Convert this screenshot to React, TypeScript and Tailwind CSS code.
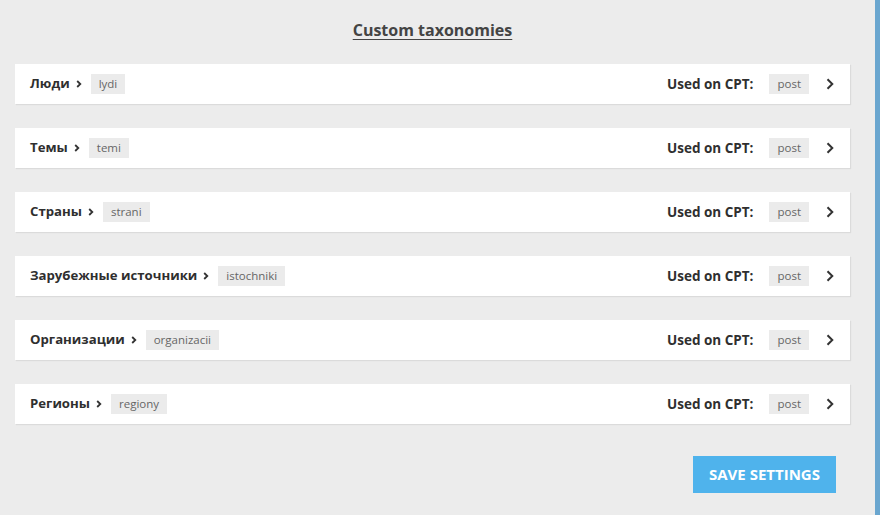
import React from "react";

const rows = [
  { name: "Люди", slug: "lydi" },
  { name: "Темы", slug: "temi" },
  { name: "Страны", slug: "strani" },
  { name: "Зарубежные источники", slug: "istochniki" },
  { name: "Организации", slug: "organizacii" },
  { name: "Регионы", slug: "regiony" },
];

function Chevron() {
  return (
    <svg width="8" height="12" viewBox="0 0 8 12" className="text-[#333]">
      <path d="M1.5 1.2 L6.3 6 L1.5 10.8" fill="none" stroke="currentColor" strokeWidth="2" />
    </svg>
  );
}

function SmallChevron() {
  return (
    <svg width="6" height="8" viewBox="0 0 6 8" className="text-[#333]">
      <path d="M1.2 1 L4.3 4 L1.2 7" fill="none" stroke="currentColor" strokeWidth="1.8" />
    </svg>
  );
}

export default function App() {
  return (
    <div
      className="flex h-[515px] w-[880px] bg-[#ececec] text-[#333]"
      style={{ fontFamily: '"Open Sans", "Noto Sans", sans-serif' }}
    >
      <div className="flex flex-1 flex-col pl-[15px] pr-[25px]">
        <h2 className="mt-[19px] text-center text-[16px] font-bold leading-[22px] text-[#444] underline underline-offset-[3px]">
          Custom taxonomies
        </h2>
        <div className="mt-[23px] flex flex-col gap-[24px]">
          {rows.map((r) => (
            <div
              key={r.slug}
              className="flex h-[40px] items-center bg-white pl-[15px] pr-[16px] shadow-[1px_1px_1px_rgba(0,0,0,0.07)]"
            >
              <span className="text-[13.2px] font-bold text-[#2f2f2f]">{r.name}</span>
              <span className="ml-[6px] flex items-center">
                <SmallChevron />
              </span>
              <span className="ml-[9px] bg-[#ebebeb] px-[8px] py-[3px] text-[11.5px] leading-[14px] text-[#666]">
                {r.slug}
              </span>
              <span className="ml-auto text-[13.5px] font-bold text-[#2f2f2f]">Used on CPT:</span>
              <span className="ml-[16px] bg-[#ebebeb] px-[8px] py-[3px] text-[11.5px] leading-[14px] text-[#666]">
                post
              </span>
              <span className="ml-[17px] flex items-center">
                <Chevron />
              </span>
            </div>
          ))}
        </div>
        <div className="mt-[32px] flex justify-end pr-[14px]">
          <button className="h-[37px] w-[143px] bg-[#4fb3ec] text-[15px] font-bold uppercase text-white">
            Save settings
          </button>
        </div>
      </div>
      <div className="w-[5px] bg-[#6aa6cf]" />
    </div>
  );
}
